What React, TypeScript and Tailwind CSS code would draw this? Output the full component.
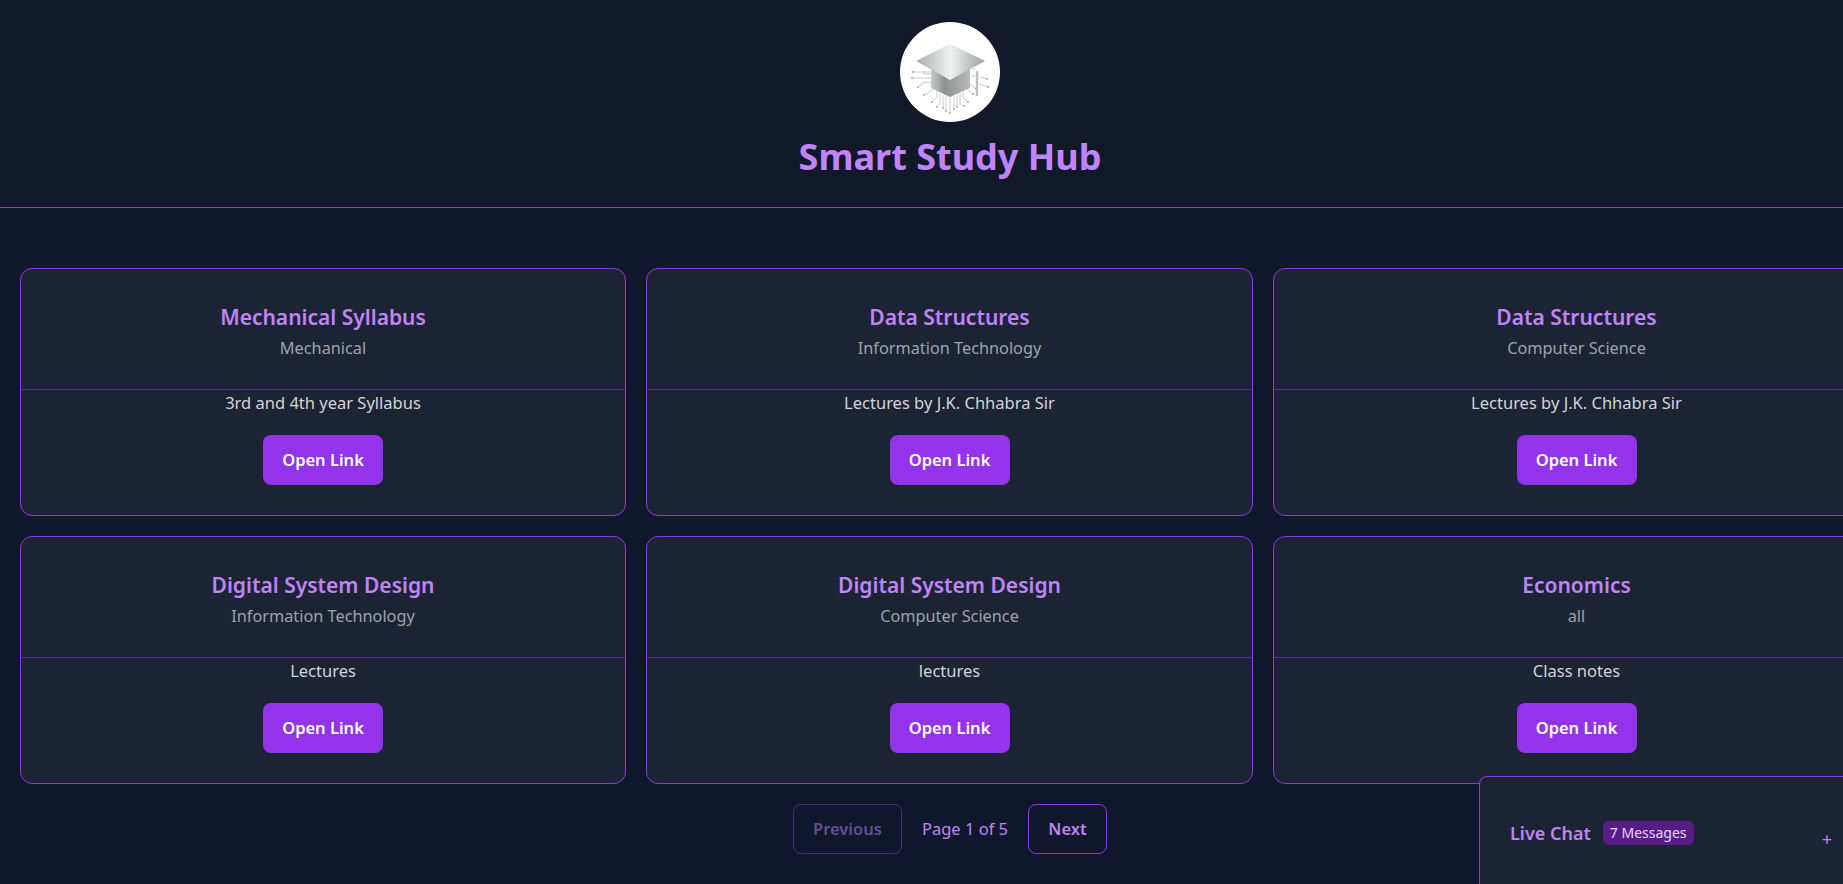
const font = "font-['Noto_Sans','Open_Sans',sans-serif]";

const resources = [
  { title: "Mechanical Syllabus", branch: "Mechanical", desc: "3rd and 4th year Syllabus" },
  { title: "Data Structures", branch: "Information Technology", desc: "Lectures by J.K. Chhabra Sir" },
  { title: "Data Structures", branch: "Computer Science", desc: "Lectures by J.K. Chhabra Sir" },
  { title: "Digital System Design", branch: "Information Technology", desc: "Lectures" },
  { title: "Digital System Design", branch: "Computer Science", desc: "lectures" },
  { title: "Economics", branch: "all", desc: "Class notes" },
];

const traces = [
  "M31 52H24V49", "M31 50H13", "M31 56H12", "M33 61L25 60L18 65", "M35 66L28 71L24 73",
  "M37 69V75L32 80", "M40 71V82L37 85", "M43 73V86", "M46 74V89", "M50 76V91", "M54 74V87",
  "M57 73V85", "M60 71V82L64 84", "M63 70V75L68 80", "M67 67L73 72", "M70 62L76 67", "M80 55L87 57",
  "M79 62L88 65", "M72 54H75", "M72 48L75 46",
];

const dots: [number, number][] = [
  [13, 50], [12, 56], [18, 65], [24, 73], [32, 80], [37, 85], [43, 86], [46, 89], [50, 91], [54, 87],
  [57, 85], [64, 84], [68, 80], [73, 72], [76, 67], [87, 57], [88, 65],
];

function Logo() {
  return (
    <svg viewBox="0 0 100 100" className="size-[100px] rounded-full bg-white">
      <defs>
        <linearGradient id="cap" x1="0" x2="1" y1="0" y2="0">
          <stop offset="0" stopColor="#a9abab" />
          <stop offset="0.5" stopColor="#f1f2f2" />
          <stop offset="1" stopColor="#9c9e9f" />
        </linearGradient>
        <linearGradient id="body" x1="0" x2="1" y1="0" y2="0">
          <stop offset="0" stopColor="#c9caca" />
          <stop offset="0.35" stopColor="#8f9192" />
          <stop offset="1" stopColor="#b8b9ba" />
        </linearGradient>
      </defs>
      <g fill="none" stroke="#b4b6b8" strokeWidth="0.7">
        {traces.map((d) => (
          <path key={d} d={d} />
        ))}
      </g>
      <g fill="#a6a8aa">
        {dots.map(([x, y]) => (
          <circle key={`${x}-${y}`} cx={x} cy={y} r="1" />
        ))}
      </g>
      <path d="M31 46V66L50 75L70 66V46Z" fill="url(#body)" />
      <path d="M16 39L50 22L85 39L50 58Z" fill="url(#cap)" />
      <path d="M77 50V73" stroke="#bdbfc1" strokeWidth="2.5" strokeLinecap="round" />
    </svg>
  );
}

function ResourceCard({ title, branch, desc }: { title: string; branch: string; desc: string }) {
  return (
    <div className="h-[248px] rounded-xl border border-[#9333ea] bg-[#1c2333] text-center">
      <div className="h-[121px] border-b border-[#9333ea]/50 pt-[34px]">
        <h2 className="text-[21px] leading-7 font-semibold text-[#c084fc]">{title}</h2>
        <p className="mt-[5px] text-[16.3px] leading-6 text-[#9ca3af]">{branch}</p>
      </div>
      <p className="pt-px text-[16.5px] leading-6 text-[#d1d5db]">{desc}</p>
      <button className="mt-[20px] h-[50px] w-[120px] rounded-lg bg-[#9333ea] pt-px text-[16.5px] font-semibold text-white">
        Open Link
      </button>
    </div>
  );
}

export default function App() {
  return (
    <div className={`relative h-screen overflow-hidden bg-[#0f172a] ${font}`}>
      <div className="w-[1900px]">
        <header className="flex h-[208px] flex-col items-center border-b border-[#9333ea] bg-[#111827] pt-[22px]">
          <Logo />
          <h1 className="mt-[10px] text-[36px] leading-[50px] font-bold text-[#c084fc]">Smart Study Hub</h1>
        </header>

        <main className="px-5 pt-[60px]">
          <div className="grid grid-cols-[606px_607px_607px] gap-5">
            {resources.map((r, i) => (
              <ResourceCard key={i} {...r} />
            ))}
          </div>

          <div className="mt-5 flex items-center justify-center gap-5">
            <button className="h-[50px] w-[109px] rounded-lg border border-[#9333ea]/50 pt-px text-[16.5px] font-semibold text-[#c084fc]/50">
              Previous
            </button>
            <span className="pt-px text-[16.5px] text-[#c084fc]">Page 1 of 5</span>
            <button className="h-[50px] w-[79px] rounded-lg border border-[#9333ea] pt-px text-[16.5px] font-semibold text-[#c084fc]">
              Next
            </button>
          </div>
        </main>
      </div>

      {/* chat stays docked to the viewport corner */}
      <div className="absolute right-0 bottom-0 flex h-[108px] w-[364px] items-center rounded-tl-lg border-t border-l border-[#9333ea] bg-[#1c2333] pt-1 pl-[30px]">
        <span className="text-lg font-semibold text-[#c084fc]">Live Chat</span>
        <span className="ml-3 rounded-md bg-[#581c87] px-[7px] py-[2px] text-sm text-[#e9d5ff]">7 Messages</span>
        <span className="absolute top-[50px] right-[11px] text-lg leading-6 text-[#c084fc]">+</span>
      </div>
    </div>
  );
}
